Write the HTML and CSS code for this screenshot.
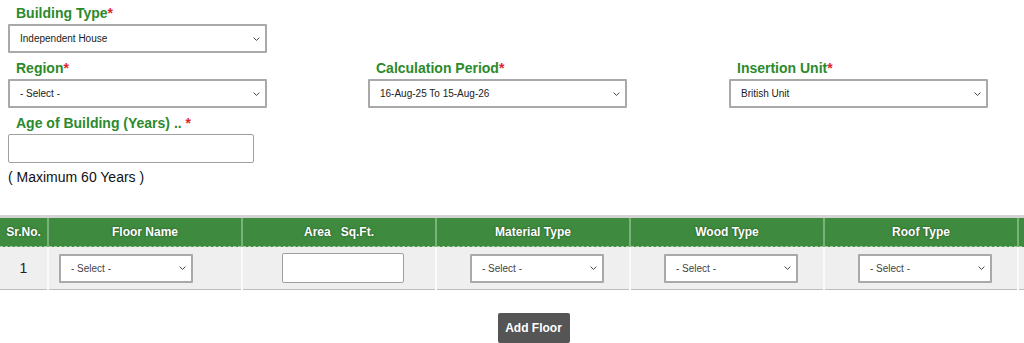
FILE: index.html
```html
<!DOCTYPE html>
<html>
<head>
<meta charset="utf-8">
<link rel="stylesheet" href="styles.css">
</head>
<body>
<div class="form">
  <div class="field">
    <label class="lbl">Building Type<span class="req">*</span></label>
    <select class="sel"><option>Independent House</option></select>
  </div>
  <div class="grid3">
    <div class="field">
      <label class="lbl">Region<span class="req">*</span></label>
      <select class="sel"><option>- Select -</option></select>
    </div>
    <div class="field">
      <label class="lbl">Calculation Period<span class="req">*</span></label>
      <select class="sel"><option>16-Aug-25 To 15-Aug-26</option></select>
    </div>
    <div class="field">
      <label class="lbl">Insertion Unit<span class="req">*</span></label>
      <select class="sel"><option>British Unit</option></select>
    </div>
  </div>
  <div class="field">
    <label class="lbl">Age of Building (Years) .. <span class="req">*</span></label>
    <input class="txt" type="text">
    <div class="note">( Maximum 60 Years )</div>
  </div>
</div>
<div class="tablewrap">
  <table class="floors">
    <colgroup>
      <col class="w-sr">
      <col class="w-c">
      <col class="w-c">
      <col class="w-c">
      <col class="w-c">
      <col class="w-c">
      <col class="w-c">
    </colgroup>
    <thead>
      <tr>
        <th class="c-sr">Sr.No.</th>
        <th>Floor Name</th>
        <th>Area &nbsp; Sq.Ft.</th>
        <th>Material Type</th>
        <th>Wood Type</th>
        <th>Roof Type</th>
        <th></th>
      </tr>
    </thead>
    <tbody>
      <tr>
        <td class="c-sr">1</td>
        <td><select class="csel floor"><option>- Select -</option></select></td>
        <td><input class="ctxt shift" type="text"></td>
        <td><select class="csel shift"><option>- Select -</option></select></td>
        <td><select class="csel shift"><option>- Select -</option></select></td>
        <td><select class="csel shift"><option>- Select -</option></select></td>
        <td></td>
      </tr>
    </tbody>
  </table>
</div>
<div class="actions">
  <button class="btn">Add Floor</button>
</div>
</body>
</html>
```

FILE: styles.css
```css
html, body {
  margin: 0;
  padding: 0;
  background: #fff;
  overflow: hidden;
  font-family: "Liberation Sans", Arial, sans-serif;
}
.form {
  padding: 5px 8px 0 8px;
}
.field {
  display: flex;
  flex-direction: column;
  align-items: flex-start;
}
.grid3 {
  display: grid;
  grid-template-columns: 360px 361px 300px;
}
.lbl {
  color: #2b8a2b;
  font-weight: bold;
  font-size: 14px;
  line-height: 16px;
  padding-left: 8px;
  margin-bottom: 3px;
}
.req {
  color: #e0242b;
}
.sel, .csel {
  -webkit-appearance: none;
  appearance: none;
  font-family: "Liberation Sans", Arial, sans-serif;
  font-size: 10px;
  background-color: #fff;
  background-image: url("data:image/svg+xml;utf8,<svg xmlns='http://www.w3.org/2000/svg' width='7' height='4' viewBox='0 0 7 4'><path d='M0.6 0.6 L3.5 3.4 L6.4 0.6' fill='none' stroke='%23444' stroke-width='1'/></svg>");
  background-repeat: no-repeat;
  background-position: right 5px center;
  background-size: 7px 4px;
  border: 2px solid #a9a9a9;
  border-radius: 1px;
}
.sel {
  width: 259px;
  height: 29px;
  color: #222;
  padding: 0 10px;
  margin-bottom: 7px;
}
.txt {
  width: 246px;
  height: 29px;
  box-sizing: border-box;
  border: 1px solid #a0a0a0;
  border-radius: 2px;
  margin: 0;
}
.note {
  font-size: 14px;
  color: #111;
  margin-top: 6px;
  line-height: 16px;
}
.tablewrap {
  margin-top: 30px;
  width: 1024px;
  overflow: hidden;
}
.floors {
  border-collapse: collapse;
  width: 1212px;
  table-layout: fixed;
  border-top: 3px solid #d3d3d3;
  border-bottom: 1px solid #bdbdbd;
}
.w-sr { width: 48px; }
.w-c { width: 194px; }
.floors th {
  background: #3e8a3e;
  color: #fff;
  font-size: 12px;
  font-weight: bold;
  text-shadow: 0 0 2px rgba(0,0,0,0.5);
  height: 28px;
  border-left: 2px solid #79b379;
  border-bottom: 1px dashed #9fcf9f;
  padding: 0;
}
.floors th.c-sr {
  border-left: none;
}
.floors td {
  background: #efefef;
  height: 42px;
  border-left: 2px solid #fafafa;
  text-align: center;
  padding: 0;
  font-size: 14px;
  color: #222;
}
.floors td.c-sr {
  border-left: none;
}
.csel {
  width: 134px;
  height: 29px;
  color: #444;
  padding: 0 10px;
  vertical-align: middle;
}
.csel.floor {
  margin-right: 38px;
}
.shift {
  margin-left: 8px;
}
.ctxt {
  width: 122px;
  height: 30px;
  box-sizing: border-box;
  border: 1px solid #a0a0a0;
  border-radius: 2px;
  vertical-align: middle;
}
.actions {
  display: flex;
  justify-content: center;
  padding-top: 23px;
  padding-left: 43px;
}
.btn {
  background: #555;
  color: #fff;
  font-family: "Liberation Sans", Arial, sans-serif;
  font-weight: bold;
  font-size: 12px;
  border: none;
  border-radius: 2px;
  height: 30px;
  width: 72px;
  padding: 0;
}
```
